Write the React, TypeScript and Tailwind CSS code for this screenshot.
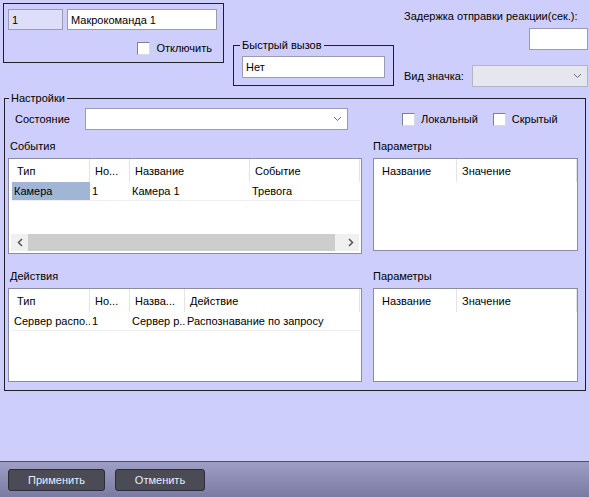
import React from 'react';

function Chevron() {
    return (
        <svg width="9" height="6" viewBox="0 0 9 6" className="shrink-0">
            <path d="M1 1 L4.5 4.5 L8 1" fill="none" stroke="#6b6b7b" strokeWidth="1" />
        </svg>
    );
}

function CheckBox({ label }: { label: string }) {
    return (
        <label className="flex items-center gap-[6px]">
            <span className="w-[13px] h-[13px] bg-white border border-[#808090] border-r-[#d8d8e8] border-b-[#d8d8e8]" />
            <span>{label}</span>
        </label>
    );
}

type Col = { title: string; w: number };

function ListView({ cols, rows, selected, scroll, h }: { cols: Col[]; rows: string[][]; selected?: boolean; scroll?: boolean; h: string }) {
    return (
        <div className={`${h} bg-white border border-[#8c8ca0] flex flex-col overflow-hidden`}>
            <div className="flex h-[23px] items-center pl-[3px]">
                {cols.map((c, i) => (
                    <div
                        key={i}
                        style={{ width: c.w }}
                        className="h-full shrink-0 flex items-center pl-[5px] border-r border-[#e4e4e4] whitespace-nowrap overflow-hidden"
                    >
                        {c.title}
                    </div>
                ))}
            </div>
            {rows.map((r, ri) => (
                <div key={ri} className="flex h-[19px] items-center pl-[3px]">
                    {cols.map((c, i) => (
                        <div
                            key={i}
                            style={{ width: c.w }}
                            className={`h-full shrink-0 flex items-center pl-[2px] whitespace-nowrap overflow-hidden border-b border-[#eeeeee] ${
                                selected && i === 0 ? 'bg-[#a0b6d4]' : ''
                            }`}
                        >
                            {r[i]}
                        </div>
                    ))}
                </div>
            ))}
            <div className="flex-1" />
            {scroll && (
                <div className="h-[17px] mx-[2px] mb-[2px] flex items-center bg-[#f0f0f0]">
                    <div className="w-[17px] flex justify-center">
                        <svg width="6" height="9" viewBox="0 0 6 9">
                            <path d="M5 1 L1.5 4.5 L5 8" fill="none" stroke="#555" strokeWidth="1.5" />
                        </svg>
                    </div>
                    <div className="w-[307px] h-full bg-[#cdcdcd]" />
                    <div className="flex-1" />
                    <div className="w-[17px] flex justify-center">
                        <svg width="6" height="9" viewBox="0 0 6 9">
                            <path d="M1 1 L4.5 4.5 L1 8" fill="none" stroke="#555" strokeWidth="1.5" />
                        </svg>
                    </div>
                </div>
            )}
        </div>
    );
}

const paramCols: Col[] = [
    { title: 'Название', w: 80 },
    { title: 'Значение', w: 120 },
];

export default function App() {
    return (
        <div className="w-[589px] h-[497px] bg-[#cecefc] flex flex-col font-['Liberation_Sans',sans-serif] text-[11px] leading-[14px] text-black overflow-hidden whitespace-nowrap">
            <div className="flex-1">
                {/* top area */}
                <div className="flex items-start h-[91px]">
                    <div className="ml-[3px] mt-[3px] w-[221px] h-[60px] border border-[#1e1e2c] pl-[4px] pt-[5px]">
                        <div className="flex gap-[4px]">
                            <div className="w-[55px] h-[21px] bg-[#dedefa] border border-[#9a9ab0] flex items-center pl-[3px]">1</div>
                            <div className="w-[150px] h-[21px] bg-white border border-[#9a9ab0] flex items-center pl-[3px]">Макрокоманда 1</div>
                        </div>
                        <div className="flex justify-end pr-[11px] mt-[11px]">
                            <CheckBox label="Отключить" />
                        </div>
                    </div>

                    <fieldset className="ml-[9px] mt-[38px] w-[161px] h-[48px] border border-[#1e1e2c] px-[8px]">
                        <legend className="ml-[-2px] px-[2px]">Быстрый вызов</legend>
                        <div className="mt-[4px] w-[143px] h-[22px] bg-white border border-[#9a9ab0] flex items-center pl-[3px]">Нет</div>
                    </fieldset>

                    <div className="ml-[10px] mt-[9px] w-[184px] flex flex-col">
                        <div>Задержка отправки реакции(сек.):</div>
                        <div className="self-end mt-[5px] w-[59px] h-[22px] bg-white border border-[#9a9ab0]" />
                        <div className="flex items-center mt-[15px]">
                            <span className="w-[68px]">Вид значка:</span>
                            <div className="w-[116px] h-[22px] bg-[#e6e6ee] border border-[#b4b4c4] flex items-center justify-end pr-[5px]">
                                <Chevron />
                            </div>
                        </div>
                    </div>
                </div>

                {/* settings */}
                <fieldset className="ml-[4px] w-[582px] h-[300px] border border-[#1e1e2c] px-[3px]">
                    <legend className="ml-[1px] px-[2px]">Настройки</legend>
                    <div className="flex items-center mt-[3px] h-[22px]">
                        <span className="ml-[7px] w-[70px]">Состояние</span>
                        <div className="w-[263px] h-[22px] bg-white border border-[#9a9ab0] flex items-center justify-end pr-[5px]">
                            <Chevron />
                        </div>
                        <div className="ml-[54px] flex gap-[15px]">
                            <CheckBox label="Локальный" />
                            <CheckBox label="Скрытый" />
                        </div>
                    </div>

                    <div className="flex gap-[11px] mt-[9px]">
                        <div className="w-[354px] flex flex-col">
                            <div className="pl-[2px] h-[14px]">События</div>
                            <div className="mt-[5px]">
                                <ListView
                                    h="h-[96px]"
                                    cols={[
                                        { title: 'Тип', w: 78 },
                                        { title: 'Но...', w: 40 },
                                        { title: 'Название', w: 120 },
                                        { title: 'Событие', w: 110 },
                                    ]}
                                    rows={[['Камера', '1', 'Камера 1', 'Тревога']]}
                                    selected
                                    scroll
                                />
                            </div>
                            <div className="pl-[2px] h-[14px] mt-[15px]">Действия</div>
                            <div className="mt-[5px]">
                                <ListView
                                    h="h-[94px]"
                                    cols={[
                                        { title: 'Тип', w: 78 },
                                        { title: 'Но...', w: 40 },
                                        { title: 'Назва...', w: 55 },
                                        { title: 'Действие', w: 175 },
                                    ]}
                                    rows={[['Сервер распо..', '1', 'Сервер р..', 'Распознавание по запросу']]}
                                />
                            </div>
                        </div>
                        <div className="w-[205px] flex flex-col">
                            <div className="h-[14px]">Параметры</div>
                            <div className="mt-[5px]">
                                <ListView h="h-[93px]" cols={paramCols} rows={[]} />
                            </div>
                            <div className="h-[14px] mt-[18px]">Параметры</div>
                            <div className="mt-[5px]">
                                <ListView h="h-[94px]" cols={paramCols} rows={[]} />
                            </div>
                        </div>
                    </div>
                </fieldset>
            </div>

            {/* bottom bar */}
            <div className="h-[36px] border-t border-[#50506a] bg-gradient-to-b from-[#9e9ec6] to-[#7a7aa2] flex items-center gap-[10px] pl-[8px]">
                <button className="w-[97px] h-[22px] rounded-[3px] bg-[#4b4b56] border border-[#2c2c36] text-[#ececff]">Применить</button>
                <button className="w-[90px] h-[22px] rounded-[3px] bg-[#4b4b56] border border-[#2c2c36] text-[#ececff]">Отменить</button>
            </div>
        </div>
    );
}
